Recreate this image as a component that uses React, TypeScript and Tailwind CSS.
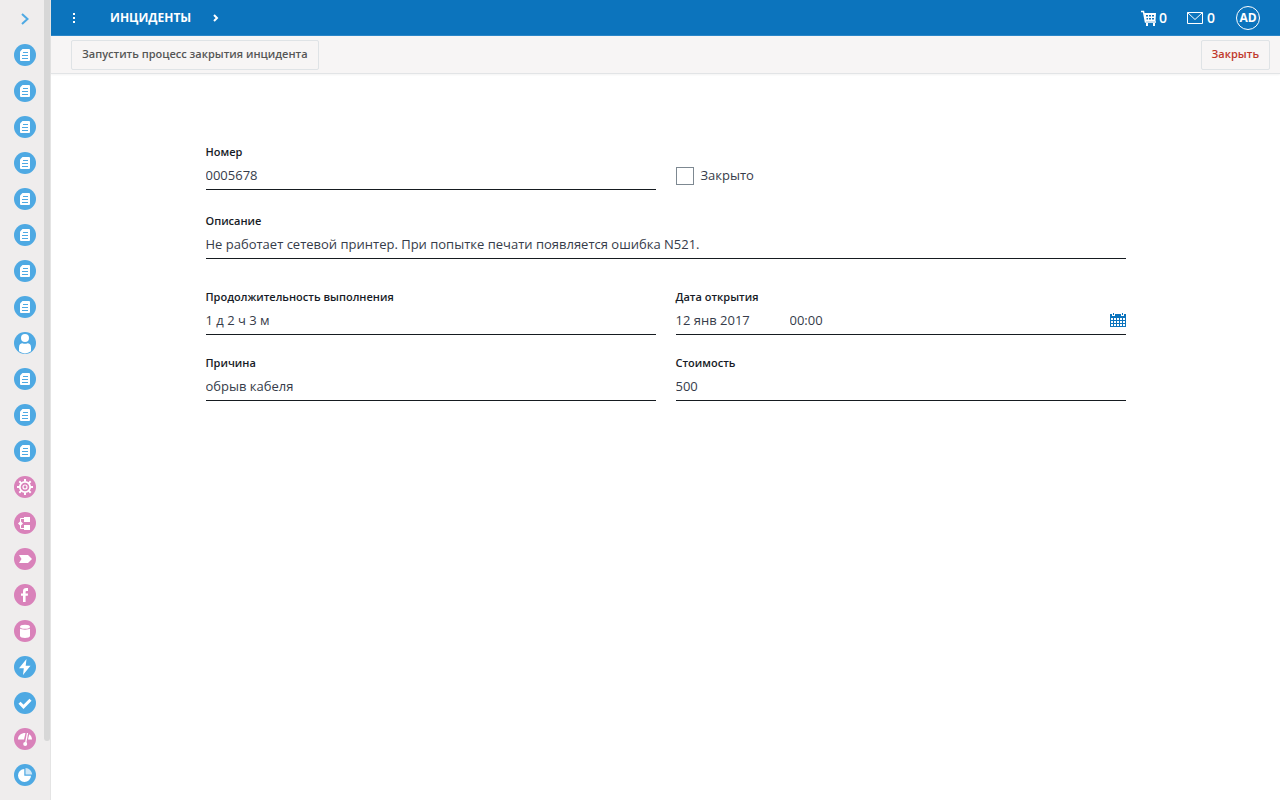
import { useState } from 'react';
import type { ReactNode } from 'react';

type IconName = 'doc' | 'user' | 'gear' | 'tree' | 'tag' | 'facebook' | 'database' | 'bolt' | 'check' | 'gauge' | 'pie';

const BLUE = '#4ea9e3';
const PINK = '#d982ba';

const items: { icon: IconName; title: string; pink?: boolean }[] = [
    { icon: 'doc', title: 'Документ 1' },
    { icon: 'doc', title: 'Документ 2' },
    { icon: 'doc', title: 'Документ 3' },
    { icon: 'doc', title: 'Документ 4' },
    { icon: 'doc', title: 'Документ 5' },
    { icon: 'doc', title: 'Документ 6' },
    { icon: 'doc', title: 'Документ 7' },
    { icon: 'doc', title: 'Документ 8' },
    { icon: 'user', title: 'Пользователи' },
    { icon: 'doc', title: 'Документ 9' },
    { icon: 'doc', title: 'Документ 10' },
    { icon: 'doc', title: 'Документ 11' },
    { icon: 'gear', title: 'Настройки', pink: true },
    { icon: 'tree', title: 'Структура', pink: true },
    { icon: 'tag', title: 'Процессы', pink: true },
    { icon: 'facebook', title: 'Facebook', pink: true },
    { icon: 'database', title: 'База данных', pink: true },
    { icon: 'bolt', title: 'События' },
    { icon: 'check', title: 'Задачи' },
    { icon: 'gauge', title: 'Показатели', pink: true },
    { icon: 'pie', title: 'Отчеты' },
];

// drawn on a 22x22 circle, c is the circle colour
const glyph = (name: IconName, c: string): ReactNode => {
    switch (name) {
        case 'doc':
            return (
                <>
                    <path d="M8.500 5H15a1 1 0 0 1 1 1v10a1 1 0 0 1-1 1H7a1 1 0 0 1-1-1V7.500z" fill="#fff" />
                    <path d="M9 8.500h5M8 11.500h6M8 14.500h6" stroke={c} strokeWidth="1" />
                </>
            );
        case 'user':
            return (
                <>
                    <circle cx="11" cy="6" r="4" fill="#fff" />
                    <path d="M5 19.300V15.500C5 12.500 6.500 11.500 8.500 11.300c1.600.7 3.400.7 5 0 2 .2 3.500 1.200 3.500 4.200v3.800a10.500 10.500 0 0 1-12 0z" fill="#fff" />
                </>
            );
        case 'gear':
            return (
                <>
                    <circle cx="11" cy="11" r="5.200" fill="none" stroke="#fff" strokeWidth="1.800" />
                    <circle cx="11" cy="11" r="2" fill="none" stroke="#fff" strokeWidth="1.200" />
                    <path
                        d="M11 3v2.500M11 16.500V19M3 11h2.500M16.500 11H19M5.300 5.300l1.800 1.800M14.900 14.900l1.800 1.800M5.300 16.700l1.800-1.800M14.900 7.100l1.800-1.800"
                        stroke="#fff"
                        strokeWidth="2"
                    />
                </>
            );
        case 'tree':
            return (
                <>
                    <path d="M10 5h6v5h-6zM10 13h6v5h-6z" fill="#fff" />
                    <path d="M10 6.500H6.500v10H10" fill="none" stroke="#fff" strokeWidth="1" />
                    <path d="M6.500 9L9 11.500 6.500 14 4 11.500z" fill="#fff" />
                </>
            );
        case 'tag':
            return <path d="M5 7h9l4 4-4 4H5l2.500-4z" fill="#fff" />;
        case 'facebook':
            return (
                <path d="M14 7h-1.500c-.6 0-.9.3-.9.900V9.500H14l-.2 2.300h-2.200V18H9v-6.200H7V9.500h2V7.300C9 5 10.200 4 12.200 4H14z" fill="#fff" />
            );
        case 'database':
            return (
                <>
                    <ellipse cx="11" cy="6.700" rx="5" ry="2" fill="#fff" />
                    <path d="M6 8.500c1.500 1.500 8.500 1.500 10 0V16c0 2.600-10 2.600-10 0z" fill="#fff" />
                </>
            );
        case 'bolt':
            return <path d="M12.500 3L5 12.300h4.800L9 19l7.500-9.300h-4.800z" fill="#fff" />;
        case 'check':
            return <path d="M5.500 10.800l4 4 7-7" fill="none" stroke="#fff" strokeWidth="3" />;
        case 'gauge':
            return (
                <>
                    <path d="M4 11.500C4 7.500 7 5 11.500 5L10 11.500zM14 11.500l1.200-5.300c1.800 1 2.800 3 2.800 5.300z" fill="#fff" />
                    <path d="M13.500 5L11.500 16" stroke="#fff" strokeWidth="1.300" />
                    <circle cx="11.200" cy="16" r="2" fill="#fff" />
                </>
            );
        case 'pie':
            return (
                <>
                    <path d="M10.300 5v6.700H17A6.500 6.500 0 1 1 10.300 5z" fill="#fff" />
                    <path d="M11.500 4a7 7 0 0 1 6.700 6.500h-6.700z" fill="#cfe7f7" />
                </>
            );
    }
};

const Sidebar = () => (
    <aside className="flex w-[51px] shrink-0 border-r border-[#e4e4e4] bg-[#efeded]">
        <nav className="flex flex-1 flex-col items-end pt-px pr-2">
            <button aria-label="Развернуть меню" className="flex h-9 w-[22px] items-center justify-center">
                <svg width="8" height="12" viewBox="0 0 8 12" fill="none" stroke={BLUE} strokeWidth="2">
                    <path d="M1 1l5.500 5L1 11" />
                </svg>
            </button>
            {items.map((item, i) => (
                <a key={i} href="#" aria-label={item.title} className="flex h-9 items-center">
                    <svg width="22" height="22" viewBox="0 0 22 22">
                        <circle cx="11" cy="11" r="11" fill={item.pink ? PINK : BLUE} />
                        {glyph(item.icon, item.pink ? PINK : BLUE)}
                    </svg>
                </a>
            ))}
        </nav>
        <div className="w-1.5">
            <div className="h-[92.6%] rounded-b-full bg-[#d7d7d7]" />
        </div>
    </aside>
);

const Header = () => (
    <header className="flex h-9 items-center border-b border-[#2a86c8] bg-[#0c74bd] pr-5 pl-5 text-white">
        <button aria-label="Меню" className="mr-[33px] flex w-1.5 justify-center">
            <svg width="4" height="12" viewBox="0 0 4 12" fill="#fff">
                <path d="M1 1h2v2H1zM1 5h2v2H1zM1 9h2v2H1z" />
            </svg>
        </button>
        <a href="#" className="text-xs font-bold">ИНЦИДЕНТЫ</a>
        <svg className="ml-[22px]" width="6" height="8" viewBox="0 0 6 8" fill="none" stroke="#fff" strokeWidth="2">
            <path d="M1 1l3 3-3 3" />
        </svg>
        <div className="ml-auto flex items-center gap-5">
            <button aria-label="Корзина" className="flex items-center gap-0.5 text-sm font-semibold">
                <svg width="16" height="16" viewBox="0 0 16 16">
                    <path d="M0 1.500h2.500l2 10.500H15" fill="none" stroke="#fff" strokeWidth="1.500" />
                    <path d="M3 3h12l-.5 8h-10z" fill="#fff" />
                    <path d="M5 5h2v1.500H5zM8 5h2v1.500H8zM11 5h2v1.500h-2zM5.500 8H7v1.500H5.500zM8 8h2v1.500H8zM11 8h2v1.500h-2z" fill="#0c74bd" />
                    <path d="M5 13h2v3H5zM12 13h2v3h-2z" fill="#fff" />
                </svg>
                0
            </button>
            <button aria-label="Сообщения" className="flex items-center gap-1 text-sm font-semibold">
                <svg width="16" height="12" viewBox="0 0 16 12" fill="none" stroke="#fff">
                    <path d="M.5.500h15v11H.5zM.5.500L8 7.500l7.500-7" />
                </svg>
                0
            </button>
            <button className="ml-px flex size-6 items-center justify-center rounded-full border border-white text-xs font-bold">
                AD
            </button>
        </div>
    </header>
);

type FieldProps = {
    id: string;
    label: string;
    value: string;
    onChange: (value: string) => void;
};

const Field = ({ id, label, value, onChange }: FieldProps) => (
    <div>
        <label htmlFor={id} className="block text-[11px] leading-4 font-semibold text-[#161b26]">{label}</label>
        <input
            id={id}
            value={value}
            onChange={(e) => onChange(e.target.value)}
            className="block h-[30px] w-full border-b border-[#161b20] text-[13px] text-[#363c4a] outline-none"
        />
    </div>
);

const CalendarIcon = () => (
    <svg width="16" height="14" viewBox="0 0 16 14">
        <path d="M0 1h2v2h3V1h6v2h3V1h2v13H0z" fill="#0c74bd" />
        <path d="M3 0h1v2H3zM12 0h1v2h-1z" fill="#0c74bd" />
        <path
            d="M1 5h2v2H1zM4 5h2v2H4zM7 5h2v2H7zM10 5h2v2h-2zM13 5h2v2h-2zM1 8h2v2H1zM4 8h2v2H4zM7 8h2v2H7zM10 8h2v2h-2zM13 8h2v2h-2zM1 11h2v2H1zM4 11h2v2H4zM7 11h2v2H7zM10 11h2v2h-2zM13 11h2v2h-2z"
            fill="#fff"
        />
    </svg>
);

const App = () => {
    const [form, setForm] = useState({
        number: '0005678',
        description: 'Не работает сетевой принтер. При попытке печати появляется ошибка N521.',
        duration: '1 д 2 ч 3 м',
        date: '12 янв 2017',
        time: '00:00',
        reason: 'обрыв кабеля',
        cost: '500',
    });
    const [closed, setClosed] = useState(false);

    const update = (key: keyof typeof form) => (value: string) => {
        setForm({ ...form, [key]: value });
    };

    return (
        <div className="flex min-h-screen bg-white font-['Open_Sans','Noto_Sans',sans-serif]">
            <Sidebar />
            <div className="flex min-w-0 flex-1 flex-col">
                <Header />
                <div className="flex h-[38px] items-center justify-between border-b border-[#e2e4e6] bg-[#f7f5f5] pr-2.5 pl-5 shadow-xs">
                    <button className="h-[30px] rounded-xs border border-[#dfe3e6] px-2.5 text-[11px] font-semibold text-[#555]">
                        Запустить процесс закрытия инцидента
                    </button>
                    <button className="h-[30px] rounded-xs border border-[#dfe3e6] px-2.5 text-[11px] font-semibold text-[#c0392b]">
                        Закрыть
                    </button>
                </div>
                <form className="mx-auto w-full max-w-[920px] pt-[70px]">
                    <div className="grid grid-cols-2 gap-x-5">
                        <Field id="number" label="Номер" value={form.number} onChange={update('number')} />
                        <label className="flex items-center gap-[7px] pt-[17px] text-[13px] text-[#363c4a]">
                            <input
                                type="checkbox"
                                checked={closed}
                                onChange={(e) => setClosed(e.target.checked)}
                                className="size-[18px] appearance-none border border-[#7d8891] checked:bg-[#0c74bd]"
                            />
                            Закрыто
                        </label>
                    </div>
                    <div className="mt-[23px]">
                        <Field id="description" label="Описание" value={form.description} onChange={update('description')} />
                    </div>
                    <div className="mt-[30px] grid grid-cols-2 gap-x-5 gap-y-5">
                        <Field id="duration" label="Продолжительность выполнения" value={form.duration} onChange={update('duration')} />
                        <div>
                            <label htmlFor="date" className="block text-[11px] leading-4 font-semibold text-[#161b26]">Дата открытия</label>
                            <div className="flex h-[30px] items-center border-b border-[#161b20] text-[13px] text-[#363c4a]">
                                <input
                                    id="date"
                                    value={form.date}
                                    onChange={(e) => update('date')(e.target.value)}
                                    className="h-full w-[114px] outline-none"
                                />
                                <input
                                    aria-label="Время открытия"
                                    value={form.time}
                                    onChange={(e) => update('time')(e.target.value)}
                                    className="h-full min-w-0 flex-1 outline-none"
                                />
                                <button type="button" aria-label="Выбрать дату">
                                    <CalendarIcon />
                                </button>
                            </div>
                        </div>
                        <Field id="reason" label="Причина" value={form.reason} onChange={update('reason')} />
                        <Field id="cost" label="Стоимость" value={form.cost} onChange={update('cost')} />
                    </div>
                </form>
            </div>
        </div>
    );
};

export default App;
